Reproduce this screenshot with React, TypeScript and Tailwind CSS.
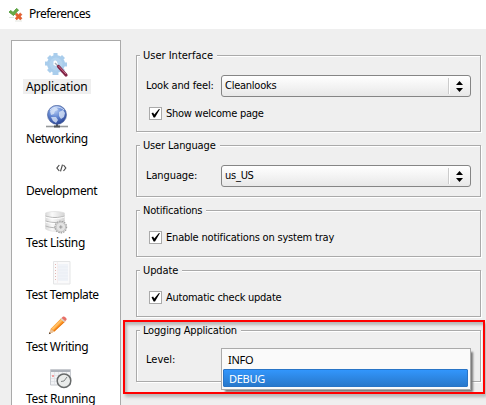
import type { ReactNode } from "react";

function AppLogo() {
  return (
    <svg width="16" height="14" viewBox="0 0 16 14">
      <path d="M1 4 3 2.500l2 2L8.500.5l2 1.500L5.500 7.500z" fill="#6caa45" stroke="#4b9a35" strokeWidth=".9" />
      <path d="m7.500 6.500 1.200-1.300 1.800 1.600 1.800-1.600L13.800 6.500l-1.500 1.800L13.800 10.500 12.300 11.700l-1.800-1.500-1.900 1.500L7.500 10.500l1.300-2z" fill="#e8602c" stroke="#d8562a" strokeWidth=".9" />
      <path d="M1 9.500h5M7 13h7" stroke="#e4e8e2" />
    </svg>
  );
}

function GearIcon() {
  return (
    <svg width="24" height="25" viewBox="0 0 24 25">
      <g fill="#a9cdec">
        <circle cx="11" cy="11" r="9" />
        <path d="M8.500 0h4l1 22h-6zM0 8.500l22 1v4L0 12.500z" />
        <path d="m2 5 3-3 15 15-3 3zM17 2l3 3L5 20l-3-3z" />
      </g>
      <circle cx="11" cy="11" r="6.500" fill="#b4d4ef" />
      <path d="M8.500 8.500c1-1.500 3-1 3.500.5l1 2.500-2 1.500-2.500-1z" fill="#fff" />
      <path d="m10 10 4 4" stroke="#a5adb8" strokeWidth="1.500" />
      <path d="m13.500 13.500 7.500 8.500" stroke="#812344" strokeWidth="3.200" strokeLinecap="round" />
      <path d="m13.500 13 7.500 8" stroke="#c77793" strokeWidth="1" />
    </svg>
  );
}

function GlobeIcon() {
  return (
    <svg width="23" height="24" viewBox="0 0 23 24">
      <defs>
        <radialGradient id="globe" cx=".4" cy=".25" r=".75">
          <stop offset="0" stopColor="#b9cff5" />
          <stop offset=".5" stopColor="#6488d2" />
          <stop offset="1" stopColor="#2b4697" />
        </radialGradient>
      </defs>
      <path d="M0 21.500h22" stroke="#96999b" strokeWidth="1.600" />
      <path d="M8 21.500h6M11 19v2" stroke="#4f5356" strokeWidth="2" />
      <circle cx="11" cy="9.800" r="9.500" fill="url(#globe)" stroke="#51699f" strokeWidth=".7" />
      <path d="M4 6c2-3 5-4 7-3l1 2-3 1-1 3-3 1zM13 7l4-2 2 3-1 4-3 2-2-3zM5 12l5 0 2 3-2 3-3-2z" fill="#dbe6f7" opacity=".8" />
      <path d="M4 5c4-4 10-4 14 0" stroke="#e8f0ff" fill="none" opacity=".8" />
    </svg>
  );
}

function CodeIcon() {
  return (
    <svg width="11" height="8" viewBox="0 0 11 8" fill="none" stroke="#4c4c4c" strokeWidth="1.200">
      <path d="M3.300 1 .9 4l2.400 3M7.500 1l2.300 3-2.300 3M6.500.7l-2 6.600" />
    </svg>
  );
}

function DatabaseIcon() {
  return (
    <svg width="23" height="23" viewBox="0 0 23 23">
      <defs>
        <linearGradient id="db">
          <stop stopColor="#d8d8d8" />
          <stop offset=".35" stopColor="#fafafa" />
          <stop offset="1" stopColor="#d4d4d4" />
        </linearGradient>
      </defs>
      <path d="M.5 2C5 0 15 0 19.500 2v16c-5 3-14 3-19 0z" fill="url(#db)" stroke="#dedede" strokeWidth=".7" />
      <path d="M.5 5c5 2 14 2 19 0M.5 10c5 2 14 2 19 0M.5 15c5 2 11 2 14 1" fill="none" stroke="#b5b5b5" />
      <path d="M.5 6c5 2 14 2 19 0M.5 11c5 2 14 2 19 0" fill="none" stroke="#fff" />
      <circle cx="15.800" cy="16" r="5.800" fill="#e0e0e0" stroke="#a2a2a2" strokeWidth="1.200" strokeDasharray="1.500 1" />
      <circle cx="15.800" cy="16" r="4.800" fill="#e3e3e3" stroke="#b5b5b5" strokeWidth=".7" />
      <path d="M15.800 14.300v3.400M14.100 16h3.400" stroke="#999" />
    </svg>
  );
}

function TemplateIcon() {
  return (
    <svg width="18" height="24" viewBox="0 0 18 24">
      <path d="M.5.500h16.500v22.500H.5z" fill="#fafafb" stroke="#e4e5e6" />
      <path d="M5 3h10v17H5z" fill="#f0f3f8" />
      <path d="M5 6h10M5 9h10M5 12h10M5 15h10M5 18h10" stroke="#e8ecf2" strokeWidth=".6" />
      <path d="M2.500 3v18" stroke="#e3b5b1" strokeDasharray="1 2" />
      <path d="M4.500 1v21" stroke="#f3e2e2" strokeWidth=".5" />
    </svg>
  );
}

function PencilIcon() {
  return (
    <svg width="20" height="20" viewBox="0 0 20 20">
      <path d="m1 18 2-5.500L13.500 2l3.500 3L6.500 15.500z" fill="#ff9a2b" />
      <path d="m3.500 12.500 10.500-10 1.300 1.300L5 14z" fill="#ffc066" />
      <path d="m6 15.200 11-10" stroke="#e87712" strokeWidth="1.100" />
      <path d="m13.500 2 1.300-1.200c1.300-1.300 4.800 1.800 3.600 3.200L17 5.300z" fill="#e77068" />
      <path d="m12.300 2.800 3.900 3.500 1-1L13.300 2z" fill="#d6d5d3" />
      <path d="m1 18 1.700-5L6.500 15.500z" fill="#e9c39c" />
      <path d="m.8 18.300.7-2 1.500.9z" fill="#46382f" />
    </svg>
  );
}

function CalendarIcon() {
  return (
    <svg width="22" height="20" viewBox="0 0 22 20">
      <path d="M.5.500h20v15.500H.5z" fill="#f2f3f5" stroke="#c8cbd0" />
      <path d="M1 1h19v2H1z" fill="#adb2ba" />
      <path d="M1 6.500h19M1 9.500h19M1 12.500h19M4.500 3v12M8.500 3v12M12.500 3v12M16.500 3v12" stroke="#d8dbe1" strokeWidth=".6" />
      <path d="M2 6h2v2H2z" fill="#f2a0a0" />
      <circle cx="14" cy="11.700" r="6.800" fill="#e9ebea" stroke="#676a6a" strokeWidth="1.500" />
      <path d="m14 12 3-4M14 12l-3 .5" fill="none" stroke="#7e8282" />
    </svg>
  );
}

const sections: { name: string; icon: ReactNode; pad: string; tracking: string }[] = [
  { name: "Application", icon: <GearIcon />, pad: "pl-[33px] pt-[6px]", tracking: "tracking-[-0.15px]" },
  { name: "Networking", icon: <GlobeIcon />, pad: "pl-[34px] pt-[6px]", tracking: "tracking-[-0.45px]" },
  { name: "Development", icon: <CodeIcon />, pad: "pl-[44px] pt-[13px]", tracking: "tracking-[-0.4px]" },
  { name: "Test Listing", icon: <DatabaseIcon />, pad: "pl-[33px] pt-[8px]", tracking: "tracking-[-0.35px]" },
  { name: "Test Template", icon: <TemplateIcon />, pad: "pl-[41px] pt-[6px]", tracking: "tracking-[-0.4px]" },
  { name: "Test Writing", icon: <PencilIcon />, pad: "pl-[36px] pt-[9px]", tracking: "tracking-[-0.4px]" },
  { name: "Test Running", icon: <CalendarIcon />, pad: "pl-[38px] pt-[10px]", tracking: "tracking-[-0.35px]" },
];

function Sidebar() {
  return (
    <nav className="ml-[11px] mt-[11px] h-[380px] w-[110px] shrink-0 border border-[#aaa] bg-white pt-[6px] font-['Noto_Sans','Open_Sans',sans-serif] text-[12px]">
      {sections.map((s, i) => (
        <div key={s.name} className="flex h-[52px] flex-col items-start">
          <div className={`h-[32px] shrink-0 ${s.pad}`}>{s.icon}</div>
          <span className={`ml-[11px] h-[15px] whitespace-nowrap px-[3px] leading-[16px] ${s.tracking} ${i === 0 ? "bg-[#efefef]" : ""}`}>{s.name}</span>
        </div>
      ))}
    </nav>
  );
}

function Group({ title, size, tracking, children }: { title: string; size: string; tracking: string; children: ReactNode }) {
  return (
    <section className={`mb-[13px] flex w-[345px] flex-col items-start border border-[#aaa] shadow-[1px_1px_0_#fff,inset_1px_1px_0_#fff] ${size}`}>
      <h2 className={`-mt-[8px] ml-[3px] h-[16px] shrink-0 whitespace-nowrap bg-[#efefef] pl-[3px] pr-[4px] leading-[16px] ${tracking}`}>{title}</h2>
      {children}
    </section>
  );
}

function Select({ label, value, tracking }: { label: string; value: string; tracking: string }) {
  return (
    <div className="mt-[11px] flex h-[22px] items-center">
      <label className={`w-[75px] whitespace-nowrap pl-[9px] ${tracking}`}>{label}</label>
      <div className="ml-[9px] flex h-[22px] w-[250px] items-center rounded-[3px] border border-[#858585] bg-linear-to-b from-white to-[#e8e8e8] pl-[3px]">
        <span className="w-[223px] tracking-[-0.25px]">{value}</span>
        <i className="h-[16px] w-[2px] border-l border-[#ccc] bg-white" />
        <svg className="ml-[6px]" width="7" height="11" viewBox="0 0 7 11">
          <path d="M3.500 0 7 4H0zM0 7h7l-3.500 4z" />
        </svg>
      </div>
    </div>
  );
}

function Check({ label, margin, tracking }: { label: string; margin: string; tracking: string }) {
  return (
    <label className={`ml-[12px] flex h-[13px] items-center ${margin}`}>
      <span className="flex h-[13px] w-[13px] shrink-0 items-center justify-center border border-[#aaa] bg-white">
        <svg width="9" height="9" viewBox="0 0 9 9">
          <path d="m.5 4.300 1.600-.8 1.200 2L7.700.2 9 0 4 8.500H2.600z" />
        </svg>
      </span>
      <span className={`ml-[4px] whitespace-nowrap ${tracking}`}>{label}</span>
    </label>
  );
}

export default function App() {
  return (
    <main className="relative h-[405px] w-[486px] overflow-hidden bg-[#efefef] font-['Noto_Sans','Open_Sans',sans-serif] text-[12px] leading-[16px] text-black">
      <header className="flex h-[29px] items-center bg-white pl-[8px]">
        <AppLogo />
        <span className="ml-[5px] mt-[-1px] tracking-[-0.5px]">Preferences</span>
      </header>
      <div className="flex">
        <Sidebar />
        <div className="ml-[15px] mt-[26px] font-['DejaVu_Sans_Condensed','DejaVu_Sans',sans-serif] text-[11px]">
          <Group title="User Interface" size="h-[77px]" tracking="tracking-normal">
            <Select label="Look and feel:" value="Cleanlooks" tracking="tracking-[-0.15px]" />
            <Check label="Show welcome page" margin="mt-[10px]" tracking="tracking-[-0.25px]" />
          </Group>
          <Group title="User Language" size="h-[52px]" tracking="tracking-[-0.15px]">
            <Select label="Language:" value="us_US" tracking="tracking-[-0.1px]" />
          </Group>
          <Group title="Notifications" size="h-[47px]" tracking="tracking-[-0.2px]">
            <Check label="Enable notifications on system tray" margin="mt-[12px]" tracking="tracking-[-0.2px]" />
          </Group>
          <Group title="Update" size="h-[47px]" tracking="tracking-[-0.1px]">
            <Check label="Automatic check update" margin="mt-[12px]" tracking="tracking-[-0.25px]" />
          </Group>
          <Group title="Logging Application" size="h-[52px]" tracking="tracking-[-0.2px]">
            <span className="ml-[9px] mt-[13px]">Level:</span>
          </Group>
        </div>
      </div>
      <div className="absolute left-[221px] top-[348px] h-[42px] w-[250px] border border-[#aaa] bg-[#fafafa] px-px pt-px text-[11px] shadow-[3px_3px_2px_-1px_#777]">
        <div className="h-[19px] pl-[5px] leading-[20px] tracking-[-0.3px]">INFO</div>
        <div className="h-[18px] w-[245px] rounded-[1px] border border-[#2874c6] bg-linear-to-b from-[#3296fc] to-[#2878cb] pl-[5px] leading-[17px] tracking-[-0.3px] text-white">DEBUG</div>
      </div>
      <div className="absolute left-[123px] top-[320px] h-[74px] w-[362px] border-2 border-[#f00] shadow-[2px_3px_3px_#8888,inset_2px_3px_3px_#8888]" />
    </main>
  );
}
